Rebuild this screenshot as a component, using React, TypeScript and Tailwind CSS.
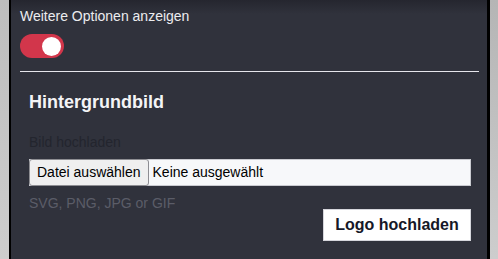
export default function App() {
  return (
    <div className="flex h-[259px] w-[498px] overflow-hidden bg-[#cdcdcd] font-['Liberation_Sans',Arial,sans-serif]">
      <div className="w-[9px] shrink-0 bg-gradient-to-b from-[#bdbdbd] to-[#cdcdcd]" />
      <div className="flex-1 border-l-2 border-r-[3px] border-black bg-[#30323c] bg-[linear-gradient(#25262f_0px,#30323c_14px)] pl-[9px] pr-[8px]">
        <p className="mt-[7px] text-[14px] leading-[18px] text-[#ececef]">Weitere Optionen anzeigen</p>
        <button className="mt-[9px] flex h-[24px] w-[44px] items-center justify-end rounded-full bg-[#d2364b] pr-[3px]">
          <span className="h-[19px] w-[19px] rounded-full bg-white" />
        </button>
        <div className="mt-[13px] h-px bg-[#e6e6ec]" />
        <div className="pl-[9px] pr-[8px]">
          <h2 className="mt-[19px] text-[18px] font-bold leading-[22px] text-[#f4f4f6]">Hintergrundbild</h2>
          <p className="mt-[20px] text-[14px] leading-[18px] text-[#23252e]">Bild hochladen</p>
          <div className="mt-[8px] flex h-[27px] items-center border border-[#c9cad0] bg-[#f7f8fa]">
            <span className="-ml-px flex h-[27px] items-center rounded-[3px] border border-[#8d8d92] bg-[#efefef] px-[7px] text-[14px] text-black">
              Datei auswählen
            </span>
            <span className="ml-[4px] text-[14px] text-black">Keine ausgewählt</span>
          </div>
          <p className="mt-[8px] text-[14px] leading-[18px] text-[#5b5d68]">SVG, PNG, JPG or GIF</p>
          <div className="-mt-[3px] flex justify-end">
            <button className="h-[32px] w-[148px] border border-[#d6d6dc] bg-white text-[16px] font-bold text-[#161827]">
              Logo hochladen
            </button>
          </div>
        </div>
      </div>
      <div className="w-[8px] shrink-0 bg-gradient-to-b from-[#b5b5b5] to-[#cdcdcd]" />
    </div>
  );
}
